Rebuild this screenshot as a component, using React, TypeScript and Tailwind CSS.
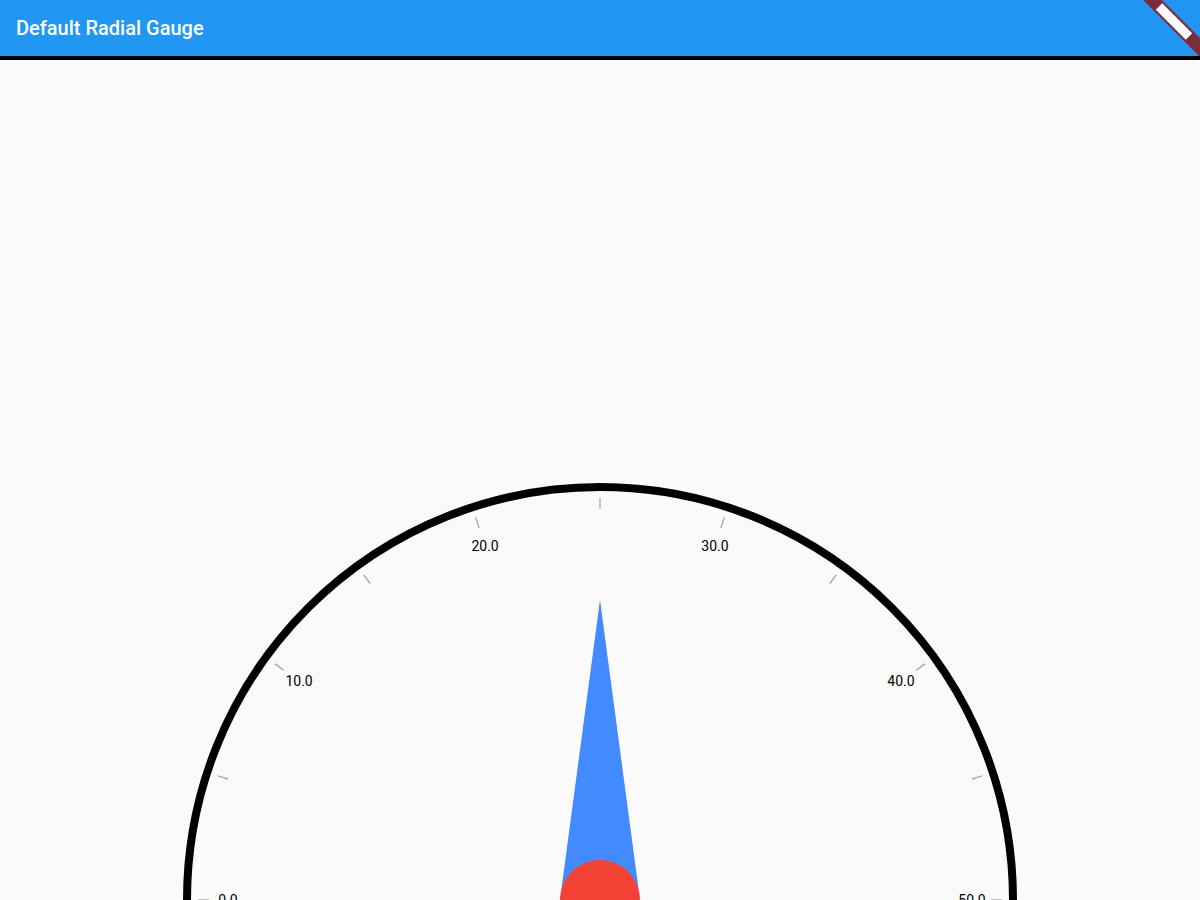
import React from 'react';

const CX = 600;
const CY = 840;

function polar(r: number, value: number) {
  const a = Math.PI - (value / 50) * Math.PI;
  return { x: CX + r * Math.cos(a), y: CY - r * Math.sin(a) };
}

function Gauge() {
  const ticks = [0, 5, 10, 15, 20, 25, 30, 35, 40, 45, 50];
  const labels = [0, 10, 20, 30, 40, 50];

  return (
    <svg width="1200" height="840" viewBox="0 0 1200 840" className="block">
      {/* Outer ring */}
      <circle cx={CX} cy={CY} r={413} fill="none" stroke="#000" strokeWidth={8} />

      {/* Ticks */}
      {ticks.map((v) => {
        const a = polar(391, v);
        const b = polar(402, v);
        return <line key={v} x1={a.x} y1={a.y} x2={b.x} y2={b.y} stroke="#9e9e9e" strokeWidth={1.2} />;
      })}

      {/* Labels */}
      {labels.map((v) => {
        const p = polar(372, v);
        return (
          <text
            key={v}
            x={p.x}
            y={p.y}
            textAnchor="middle"
            dominantBaseline="central"
            fontFamily="Roboto, sans-serif"
            fontSize={14}
            fill="#000"
          >
            {v.toFixed(1)}
          </text>
        );
      })}

      {/* Needle */}
      <polygon points={`${CX},${CY - 300} ${CX - 40},${CY} ${CX + 40},${CY}`} fill="#448aff" />
      <circle cx={CX} cy={CY} r={40} fill="#f44336" />
    </svg>
  );
}

export default function App() {
  return (
    <div className="w-[1200px] h-[900px] overflow-hidden bg-[#fafafa] flex flex-col">
      <header className="relative h-[60px] shrink-0 bg-[#2196f3] border-b-4 border-black flex items-center px-4">
        <h1 className="text-white text-[20px] font-medium font-['Roboto',sans-serif] leading-none">
          Default Radial Gauge
        </h1>
        {/* Debug banner */}
        <svg width="60" height="57" viewBox="1140 0 60 57" className="absolute top-0 right-0">
          <polygon points="1143,0 1162,0 1200,38 1200,57" fill="#7d2b3f" />
          <polygon points="1155.8,9.7 1162.2,3.3 1192.2,33.3 1185.8,39.7" fill="#fff" />
        </svg>
      </header>
      <main className="flex-1 overflow-hidden">
        <Gauge />
      </main>
    </div>
  );
}
